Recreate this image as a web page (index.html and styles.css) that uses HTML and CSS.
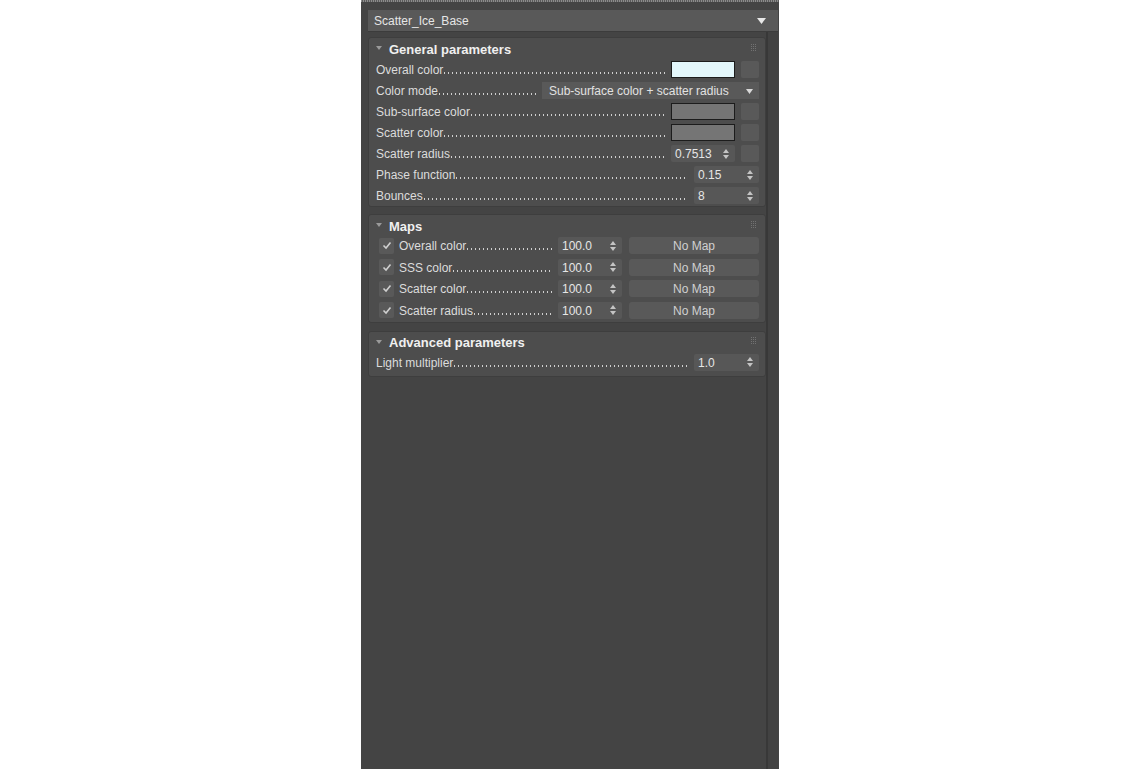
FILE: index.html
```html
<!DOCTYPE html>
<html lang="en">
<head>
    <meta charset="UTF-8">
    <title>Scatter_Ice_Base</title>
    <link rel="stylesheet" href="styles.css">
</head>
<body>
    <div class="panel">
        <div class="top-grip"></div>
        <div class="name-box">
            <span>Scatter_Ice_Base</span>
            <svg class="name-arrow" width="9" height="6" viewBox="0 0 9 6"><path d="M0 0H9L4.5 6Z" fill="#e8e8e8"/></svg>
        </div>
        <div class="content">
            <div class="rollouts">
                <div class="rollout first">
                    <div class="rollout-head">
                        <svg class="fold" width="6" height="4" viewBox="0 0 6 4"><path d="M0 0H6L3 4Z" fill="#9a9a9a"/></svg>
                        <span>General parameters</span>
                        <svg class="grip" width="5" height="7" viewBox="0 0 5 7"><path d="M0 0h1v1h-1z M2 0h1v1h-1z M4 0h1v1h-1z M0 2h1v1h-1z M2 2h1v1h-1z M4 2h1v1h-1z M0 4h1v1h-1z M2 4h1v1h-1z M4 4h1v1h-1z M0 6h1v1h-1z M2 6h1v1h-1z M4 6h1v1h-1z" fill="#727272"/></svg>
                    </div>
                    <div class="rows">
                        <div class="row">
                            <div class="label"><span>Overall color</span><i class="dots"></i></div>
                            <div class="swatch" style="background: #e3f7fb;"></div>
                            <div class="map-btn"></div>
                        </div>
                        <div class="row">
                            <div class="label"><span>Color mode</span><i class="dots"></i></div>
                            <div class="dropdown">
                                <span>Sub-surface color + scatter radius</span>
                                <svg width="7" height="5" viewBox="0 0 7 5"><path d="M0 0H7L3.5 5Z" fill="#d8d8d8"/></svg>
                            </div>
                        </div>
                        <div class="row">
                            <div class="label"><span>Sub-surface color</span><i class="dots"></i></div>
                            <div class="swatch" style="background: #757575;"></div>
                            <div class="map-btn"></div>
                        </div>
                        <div class="row">
                            <div class="label"><span>Scatter color</span><i class="dots"></i></div>
                            <div class="swatch" style="background: #757575;"></div>
                            <div class="map-btn"></div>
                        </div>
                        <div class="row">
                            <div class="label"><span>Scatter radius</span><i class="dots"></i></div>
                            <div class="spinner">
                                <span>0.7513</span>
                                <svg width="6" height="10" viewBox="0 0 6 10"><path d="M0 4H6L3 0Z M0 6H6L3 10Z" fill="#c4c4c4"/></svg>
                            </div>
                            <div class="map-btn"></div>
                        </div>
                        <div class="row">
                            <div class="label"><span>Phase function</span><i class="dots"></i></div>
                            <div class="spinner wide">
                                <span>0.15</span>
                                <svg width="6" height="10" viewBox="0 0 6 10"><path d="M0 4H6L3 0Z M0 6H6L3 10Z" fill="#c4c4c4"/></svg>
                            </div>
                        </div>
                        <div class="row">
                            <div class="label"><span>Bounces</span><i class="dots"></i></div>
                            <div class="spinner wide">
                                <span>8</span>
                                <svg width="6" height="10" viewBox="0 0 6 10"><path d="M0 4H6L3 0Z M0 6H6L3 10Z" fill="#c4c4c4"/></svg>
                            </div>
                        </div>
                    </div>
                </div>

                <div class="rollout">
                    <div class="rollout-head">
                        <svg class="fold" width="6" height="4" viewBox="0 0 6 4"><path d="M0 0H6L3 4Z" fill="#9a9a9a"/></svg>
                        <span>Maps</span>
                        <svg class="grip" width="5" height="7" viewBox="0 0 5 7"><path d="M0 0h1v1h-1z M2 0h1v1h-1z M4 0h1v1h-1z M0 2h1v1h-1z M2 2h1v1h-1z M4 2h1v1h-1z M0 4h1v1h-1z M2 4h1v1h-1z M4 4h1v1h-1z M0 6h1v1h-1z M2 6h1v1h-1z M4 6h1v1h-1z" fill="#727272"/></svg>
                    </div>
                    <div class="rows maps">
                        <div class="row">
                            <div class="check"><svg width="10" height="9" viewBox="0 0 10 9"><path d="M1.5 4.5L4 7L8.5 1.5" fill="none" stroke="#cfcfcf" stroke-width="1.6"/></svg></div>
                            <div class="label"><span>Overall color</span><i class="dots"></i></div>
                            <div class="spinner">
                                <span>100.0</span>
                                <svg width="6" height="10" viewBox="0 0 6 10"><path d="M0 4H6L3 0Z M0 6H6L3 10Z" fill="#c4c4c4"/></svg>
                            </div>
                            <div class="nomap">No Map</div>
                        </div>
                        <div class="row">
                            <div class="check"><svg width="10" height="9" viewBox="0 0 10 9"><path d="M1.5 4.5L4 7L8.5 1.5" fill="none" stroke="#cfcfcf" stroke-width="1.6"/></svg></div>
                            <div class="label"><span>SSS color</span><i class="dots"></i></div>
                            <div class="spinner">
                                <span>100.0</span>
                                <svg width="6" height="10" viewBox="0 0 6 10"><path d="M0 4H6L3 0Z M0 6H6L3 10Z" fill="#c4c4c4"/></svg>
                            </div>
                            <div class="nomap">No Map</div>
                        </div>
                        <div class="row">
                            <div class="check"><svg width="10" height="9" viewBox="0 0 10 9"><path d="M1.5 4.5L4 7L8.5 1.5" fill="none" stroke="#cfcfcf" stroke-width="1.6"/></svg></div>
                            <div class="label"><span>Scatter color</span><i class="dots"></i></div>
                            <div class="spinner">
                                <span>100.0</span>
                                <svg width="6" height="10" viewBox="0 0 6 10"><path d="M0 4H6L3 0Z M0 6H6L3 10Z" fill="#c4c4c4"/></svg>
                            </div>
                            <div class="nomap">No Map</div>
                        </div>
                        <div class="row">
                            <div class="check"><svg width="10" height="9" viewBox="0 0 10 9"><path d="M1.5 4.5L4 7L8.5 1.5" fill="none" stroke="#cfcfcf" stroke-width="1.6"/></svg></div>
                            <div class="label"><span>Scatter radius</span><i class="dots"></i></div>
                            <div class="spinner">
                                <span>100.0</span>
                                <svg width="6" height="10" viewBox="0 0 6 10"><path d="M0 4H6L3 0Z M0 6H6L3 10Z" fill="#c4c4c4"/></svg>
                            </div>
                            <div class="nomap">No Map</div>
                        </div>
                    </div>
                </div>

                <div class="rollout last">
                    <div class="rollout-head">
                        <svg class="fold" width="6" height="4" viewBox="0 0 6 4"><path d="M0 0H6L3 4Z" fill="#9a9a9a"/></svg>
                        <span>Advanced parameters</span>
                        <svg class="grip" width="5" height="7" viewBox="0 0 5 7"><path d="M0 0h1v1h-1z M2 0h1v1h-1z M4 0h1v1h-1z M0 2h1v1h-1z M2 2h1v1h-1z M4 2h1v1h-1z M0 4h1v1h-1z M2 4h1v1h-1z M4 4h1v1h-1z M0 6h1v1h-1z M2 6h1v1h-1z M4 6h1v1h-1z" fill="#727272"/></svg>
                    </div>
                    <div class="rows">
                        <div class="row">
                            <div class="label"><span>Light multiplier</span><i class="dots"></i></div>
                            <div class="spinner wide">
                                <span>1.0</span>
                                <svg width="6" height="10" viewBox="0 0 6 10"><path d="M0 4H6L3 0Z M0 6H6L3 10Z" fill="#c4c4c4"/></svg>
                            </div>
                        </div>
                    </div>
                </div>
            </div>
            <div class="scroll"></div>
        </div>
    </div>
</body>
</html>
```

FILE: styles.css
```css
body {
    margin: 0;
    background: #ffffff;
    display: flex;
    justify-content: center;
    height: 100vh;
    font-family: 'Liberation Sans', Arial, sans-serif;
    font-size: 12px;
    color: #dcdcdc;
}
.panel {
    width: 418px;
    height: 100vh;
    background: #444444;
    display: flex;
    flex-direction: column;
    padding: 0 1px 0 7px;
    box-sizing: border-box;
}
.top-grip {
    height: 2px;
    margin-left: -7px;
    margin-right: -1px;
    background: repeating-linear-gradient(to right, #8c8c8c 0 1px, #5a5a5a 1px 2px);
}
.name-box {
    margin-top: 8px;
    height: 22px;
    background: #595959;
    border-bottom: 1px solid #3c3c3c;
    box-sizing: border-box;
    display: flex;
    align-items: center;
    padding: 0 12px 0 6px;
    color: #e6e6e6;
}
.name-box span {
    flex: 1;
}
.content {
    flex: 1;
    display: flex;
}
.rollouts {
    flex: 1;
    padding-top: 5px;
    display: flex;
    flex-direction: column;
    gap: 7px;
}
.scroll {
    width: 10px;
    border-left: 2px solid #383838;
    background: #424242;
}
.rollout {
    background: #4d4d4d;
    border: 1px solid #3e3e3e;
    border-radius: 3px;
    padding: 0 6px 3px 7px;
}
.rollout.first .rows {
    margin-top: 1px;
}
.rollout.first {
    padding-bottom: 2px;
}
.rollout.last {
    margin-top: 1px;
    padding-bottom: 5px;
}
.rollout-head {
    height: 22px;
    display: flex;
    align-items: center;
    font-weight: bold;
    font-size: 13px;
    color: #f0f0f0;
}
.fold {
    margin-right: 7px;
    margin-top: -2px;
}
.rollout-head span {
    flex: 1;
}
.grip {
    margin-right: 3px;
    margin-top: -4px;
}
.rows {
    display: flex;
    flex-direction: column;
    gap: 4px;
}
.rows.maps {
    gap: 4.5px;
}
.row {
    height: 17px;
    display: flex;
    align-items: center;
}
.label {
    flex: 1;
    display: flex;
    align-items: baseline;
    margin-right: 6px;
    padding-top: 1px;
    white-space: nowrap;
}
.dots {
    flex: 1;
    height: 9px;
    margin-left: 1px;
    background: linear-gradient(to right, #cfcfcf 1px, transparent 1px) 0 100% / 4px 2px repeat-x;
}
.swatch {
    width: 64px;
    height: 17px;
    border: 1px solid #1c1c1c;
    box-sizing: border-box;
}
.map-btn {
    width: 18px;
    height: 17px;
    margin-left: 6px;
    background: #595959;
    border-radius: 2px;
}
.dropdown {
    width: 217px;
    height: 17px;
    background: #595959;
    display: flex;
    align-items: center;
    padding: 1px 6px 0 7px;
    box-sizing: border-box;
    color: #e2e2e2;
}
.dropdown span {
    flex: 1;
}
.spinner {
    width: 64px;
    height: 17px;
    background: #575757;
    border-radius: 2px;
    display: flex;
    align-items: center;
    padding: 1px 6px 0 4px;
    box-sizing: border-box;
    color: #e6e6e6;
}
.spinner.wide {
    width: 65px;
}
.spinner span {
    flex: 1;
}
.spinner svg {
    margin-top: -1px;
}
.check {
    width: 15px;
    height: 16px;
    margin: 0 5px 0 3px;
    background: #595959;
    border-radius: 2px;
    display: flex;
    align-items: center;
    justify-content: center;
}
.nomap {
    width: 130px;
    height: 17px;
    margin-left: 7px;
    padding-top: 1px;
    box-sizing: border-box;
    background: #595959;
    border-radius: 3px;
    display: flex;
    align-items: center;
    justify-content: center;
    color: #d0d0d0;
}
```
